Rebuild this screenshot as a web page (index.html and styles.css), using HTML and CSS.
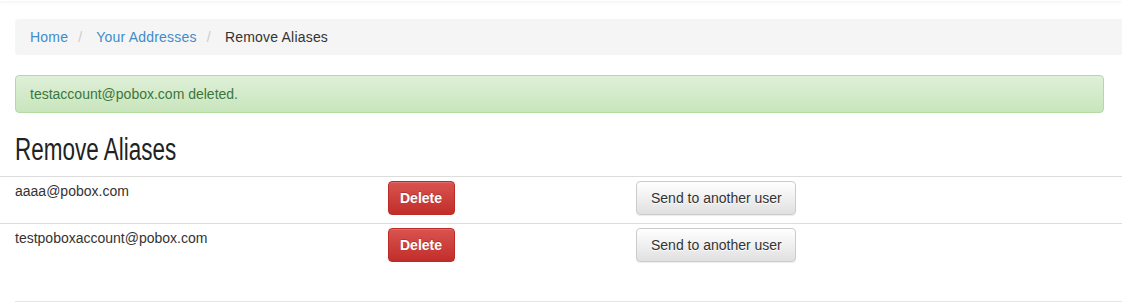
FILE: index.html
```html
<!DOCTYPE html>
<html lang="en">
<head>
    <meta charset="UTF-8">
    <title>Remove Aliases</title>
    <link rel="stylesheet" href="styles.css">
</head>
<body>
    <div class="topbar"></div>
    <div class="container">
        <ol class="breadcrumb">
            <li><a href="#">Home</a></li>
            <li><a href="#">Your Addresses</a></li>
            <li class="active">Remove Aliases</li>
        </ol>

        <div class="alert">testaccount@pobox.com deleted.</div>

        <h1>Remove Aliases</h1>

        <div class="aliases">
            <div class="alias-row">
                <div class="alias-name">aaaa@pobox.com</div>
                <div><button class="btn btn-danger">Delete</button></div>
                <div><button class="btn btn-default">Send to another user</button></div>
            </div>
            <div class="alias-row">
                <div class="alias-name">testpoboxaccount@pobox.com</div>
                <div><button class="btn btn-danger">Delete</button></div>
                <div><button class="btn btn-default">Send to another user</button></div>
            </div>
        </div>

        <hr>
    </div>
</body>
</html>
```

FILE: styles.css
```css
body {
    margin: 0;
    font-family: "Liberation Sans", Arial, sans-serif;
    font-size: 14px;
    line-height: 20px;
    color: #333;
    background: #fff;
    overflow: hidden;
}

/* faint navbar shadow at the top */
.topbar {
    height: 1px;
    background: #fff;
    box-shadow: 0 1px 3px rgba(0, 0, 0, 0.12);
}

.container {
    padding: 0 18px 0 15px;
}

.breadcrumb {
    list-style: none;
    margin: 18px -40px 20px 0;
    padding: 8px 15px;
    background: #f5f5f5;
    border-radius: 4px;
    display: flex;
    letter-spacing: 0.2px;
}

.breadcrumb li + li::before {
    content: "/\00a0";
    padding: 0 10px;
    color: #ccc;
}

.breadcrumb a {
    color: #428bca;
    text-decoration: none;
}

.breadcrumb .active {
    color: #333;
}

.alert {
    padding: 8px 14px;
    border: 1px solid #b2dba1;
    border-radius: 4px;
    background: linear-gradient(to bottom, #dff0d8, #c8e5bc);
    color: #3c763d;
}

/* narrow display face is not installed, so squeeze the sans */
h1 {
    font-family: "Liberation Sans", sans-serif;
    font-weight: normal;
    font-size: 31px;
    line-height: 36px;
    color: #222;
    margin: 19px 0 8px;
    transform: scaleX(0.725);
    transform-origin: left center;
}

.aliases {
    margin-left: -15px;
    margin-right: -18px;
}

.alias-row {
    display: grid;
    grid-template-columns: 388px 248px 1fr;
    border-top: 1px solid #ddd;
    padding: 4px 0 8px;
}

.alias-name {
    padding-left: 15px;
}

.btn {
    font-family: "Liberation Sans", Arial, sans-serif;
    font-size: 14px;
    line-height: 20px;
    height: 34px;
    padding: 6px 12px;
    border-radius: 4px;
    border: 1px solid;
    cursor: pointer;
}

.btn-danger {
    color: #fff;
    font-weight: bold;
    padding: 6px 12px 6px 11px;
    background: linear-gradient(to bottom, #d9534f, #c12e2a);
    border-color: #b92c28;
    text-shadow: 0 -1px 0 rgba(0, 0, 0, 0.2);
    box-shadow: inset 0 1px 0 rgba(255, 255, 255, 0.15);
}

.btn-default {
    color: #333;
    padding: 6px 13px 6px 14px;
    background: linear-gradient(to bottom, #fff, #e0e0e0);
    border-color: #ccc;
    text-shadow: 0 1px 0 #fff;
    box-shadow: inset 0 1px 0 rgba(255, 255, 255, 0.15), 0 1px 1px rgba(0, 0, 0, 0.075);
}

hr {
    border: 0;
    border-top: 1px solid #e5e5e5;
    margin: 31px -18px 0 0;
}
```
